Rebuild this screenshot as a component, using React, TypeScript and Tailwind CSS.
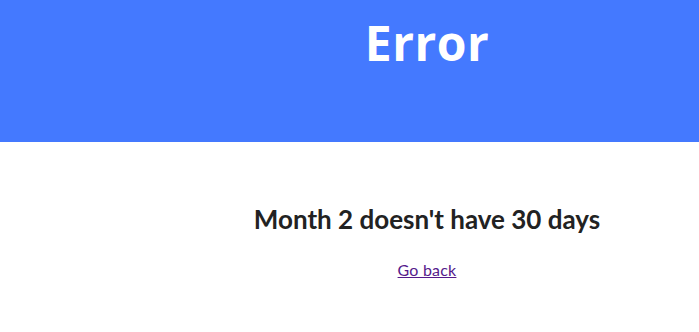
export default function App() {
  return (
    <div className="min-h-screen bg-white" style={{ fontFamily: 'Lato, "Noto Sans", sans-serif' }}>
      <header className="h-[142px] bg-[#4479ff] pl-[155px] pt-[12px] flex justify-center">
        <h1
          className="text-[48px] leading-[62px] font-bold text-white tracking-[0.5px]"
          style={{ fontFamily: '"Open Sans", sans-serif' }}
        >
          Error
        </h1>
      </header>
      <main className="pl-[155px] pt-[60px] flex flex-col items-center">
        <h2 className="text-[26px] leading-[34px] font-bold text-[#222]">Month 2 doesn't have 30 days</h2>
        <a href="#" className="mt-[24px] text-[16px] leading-[20px] underline text-[#551a8b] tracking-[0.2px]">
          Go back
        </a>
      </main>
    </div>
  );
}
